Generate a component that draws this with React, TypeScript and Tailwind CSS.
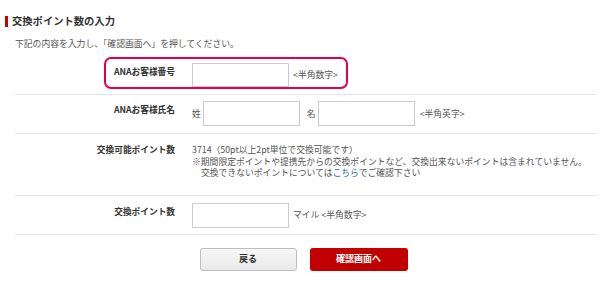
import React from "react";

const font = {
  fontFamily: '"Noto Sans CJK JP", "Noto Sans", "Liberation Sans", sans-serif',
};

function Row({
  label,
  children,
  className,
  labelPad = "pt-[3px]",
}: {
  label: string;
  children: React.ReactNode;
  className: string;
  labelPad?: string;
}) {
  return (
    <div className={"relative flex items-start border-b border-[#e6e6e6] " + className}>
      <div className={"w-[160px] shrink-0 text-right text-[8.7px] font-bold leading-[12px] text-[#333] " + labelPad}>
        {label}
      </div>
      <div className="ml-[17px] flex-1">{children}</div>
    </div>
  );
}

export default function App() {
  return (
    <div className="w-[600px] h-[294px] bg-white overflow-hidden" style={font}>
      <div className="flex items-center pt-[14px] pl-[5px]">
        <span className="w-[3px] h-[11px] bg-[#c40000] mr-[4px]" />
        <h1 className="text-[10.3px] font-bold leading-[14px] text-[#333]">交換ポイント数の入力</h1>
      </div>

      <p className="mt-[10px] pl-[15px] text-[8.8px] leading-[12px] text-[#555]">
        下記の内容を入力し、「確認画面へ」を押してください。
      </p>

      <div className="ml-[15px] mr-[3px] mt-[6px]">
        <Row label="ANAお客様番号" className="pt-[7px] pb-[7px]">
          <div className="absolute left-[89px] top-[1px] w-[244px] h-[32px] rounded-[7px] border-2 border-[#e5004c]" />
          <div className="flex items-center">
            <input className="w-[97px] h-[24px] border border-[#cccccc] bg-white outline-none" />
            <span className="ml-[4px] text-[8.8px] text-[#555]">&lt;半角数字&gt;</span>
          </div>
        </Row>

        <Row label="ANAお客様氏名" className="pt-[6px] pb-[7px]">
          <div className="flex items-center text-[8.8px] text-[#555]">
            <span>姓</span>
            <input className="ml-[2px] w-[97px] h-[25px] border border-[#cccccc] bg-white outline-none" />
            <span className="ml-[7px]">名</span>
            <input className="ml-[2px] w-[97px] h-[25px] border border-[#cccccc] bg-white outline-none" />
            <span className="ml-[5px]">&lt;半角英字&gt;</span>
          </div>
        </Row>

        <Row label="交換可能ポイント数" className="pt-[10px] pb-[16px]" labelPad="pt-0">
          <div className="text-[8.8px] leading-[11.5px] text-[#555] whitespace-nowrap">
            <p>3714（50pt以上2pt単位で交換可能です）</p>
            <p>※期間限定ポイントや提携先からの交換ポイントなど、交換出来ないポイントは含まれていません。</p>
            <p className="pl-[9px]">
              交換できないポイントについては<span className="text-[#2a6ebb]">こちら</span>でご確認下さい
            </p>
          </div>
        </Row>

        <Row label="交換ポイント数" className="pt-[7px] pb-[6px]">
          <div className="flex items-center">
            <input className="w-[97px] h-[25px] border border-[#cccccc] bg-white outline-none" />
            <span className="ml-[4px] text-[8.8px] text-[#555]">マイル &lt;半角数字&gt;</span>
          </div>
        </Row>
      </div>

      <div className="mt-[13px] flex justify-center gap-[13px] pl-[7px]">
        <button className="w-[97px] h-[23px] rounded-[3px] border border-[#bdbdbd] bg-gradient-to-b from-[#f7f7f7] to-[#e9e9e9] text-[9px] font-bold text-[#333]">
          戻る
        </button>
        <button className="w-[98px] h-[23px] rounded-[3px] bg-[#c10000] text-[9px] font-bold text-white">
          確認画面へ
        </button>
      </div>
    </div>
  );
}
